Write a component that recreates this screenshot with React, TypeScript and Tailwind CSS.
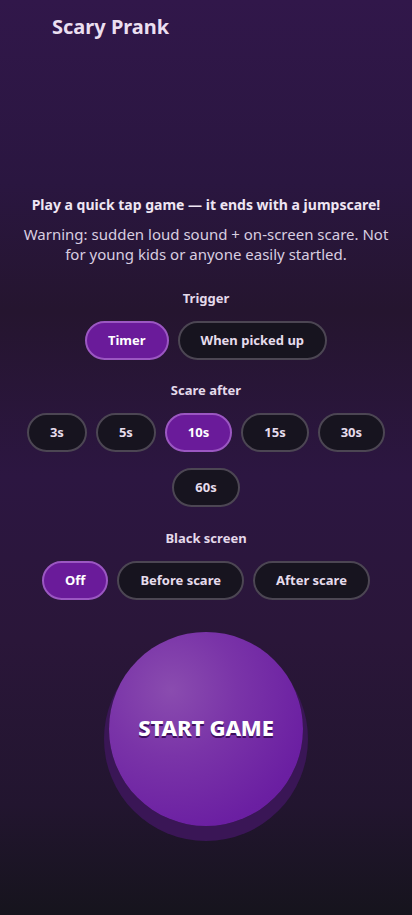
import React, { useState } from 'react';

const font = { fontFamily: '"Noto Sans", "Open Sans", sans-serif' };

const Pill: React.FC<{ label: string; active: boolean; onClick: () => void }> = ({ label, active, onClick }) => (
  <button
    onClick={onClick}
    className={`h-[39px] rounded-full border-2 px-[21px] text-[13px] font-bold leading-none ${
      active ? 'bg-[#6a1b9a] border-[#9b57c2] text-white' : 'bg-[#17141f] border-[#4c4653] text-[#e6dcec]'
    }`}
  >
    {label}
  </button>
);

const Label: React.FC<{ children: React.ReactNode }> = ({ children }) => (
  <p className="text-center text-[13px] font-bold leading-[18px] text-[#e4d9ea]">{children}</p>
);

export default function App() {
  const [trigger, setTrigger] = useState('Timer');
  const [delay, setDelay] = useState('10s');
  const [black, setBlack] = useState('Off');

  return (
    <div
      style={font}
      className="min-h-[915px] w-full bg-[linear-gradient(180deg,#31174a_0%,#2a1640_20%,#25152f_34%,#2c1641_52%,#2a1639_70%,#22152f_88%,#16141d_100%)] text-[#eadff0]"
    >
      <h1 className="pl-[52px] pt-[15px] text-[20px] font-bold leading-[24px] text-[#ebdff0]">Scary Prank</h1>

      <div className="mt-[156px] flex flex-col items-center">
        <p className="text-center text-[14px] font-bold leading-[20px] text-[#efe6f3]">
          Play a quick tap game — it ends with a jumpscare!
        </p>
        <p className="mt-[9px] max-w-[368px] text-center text-[15px] leading-[20px] text-[#d9cee0]">
          Warning: sudden loud sound + on-screen scare. Not for young kids or anyone easily startled.
        </p>

        <div className="mt-[25px]">
          <Label>Trigger</Label>
        </div>
        <div className="mt-[14px] flex justify-center gap-[9px]">
          {['Timer', 'When picked up'].map((t) => (
            <Pill key={t} label={t} active={trigger === t} onClick={() => setTrigger(t)} />
          ))}
        </div>

        <div className="mt-[21px]">
          <Label>Scare after</Label>
        </div>
        <div className="mt-[14px] flex max-w-[372px] flex-wrap justify-center gap-x-[9px] gap-y-[16px]">
          {['3s', '5s', '10s', '15s', '30s', '60s'].map((t) => (
            <Pill key={t} label={t} active={delay === t} onClick={() => setDelay(t)} />
          ))}
        </div>

        <div className="mt-[22px]">
          <Label>Black screen</Label>
        </div>
        <div className="mt-[14px] flex justify-center gap-[9px]">
          {['Off', 'Before scare', 'After scare'].map((t) => (
            <Pill key={t} label={t} active={black === t} onClick={() => setBlack(t)} />
          ))}
        </div>

        <button className="mt-[32px] flex h-[194px] w-[194px] items-center justify-center rounded-full bg-[radial-gradient(circle_at_32%_30%,#8a4caf_0%,#7a34a8_35%,#6b1fa2_75%,#661a9c_100%)] pb-[4px] shadow-[0_10px_0_5px_#3a1656]">
          <span className="text-[22px] font-extrabold tracking-[-0.2px] text-white [text-shadow:0_2px_0_#3c0f5e]">
            START GAME
          </span>
        </button>
      </div>
    </div>
  );
}
